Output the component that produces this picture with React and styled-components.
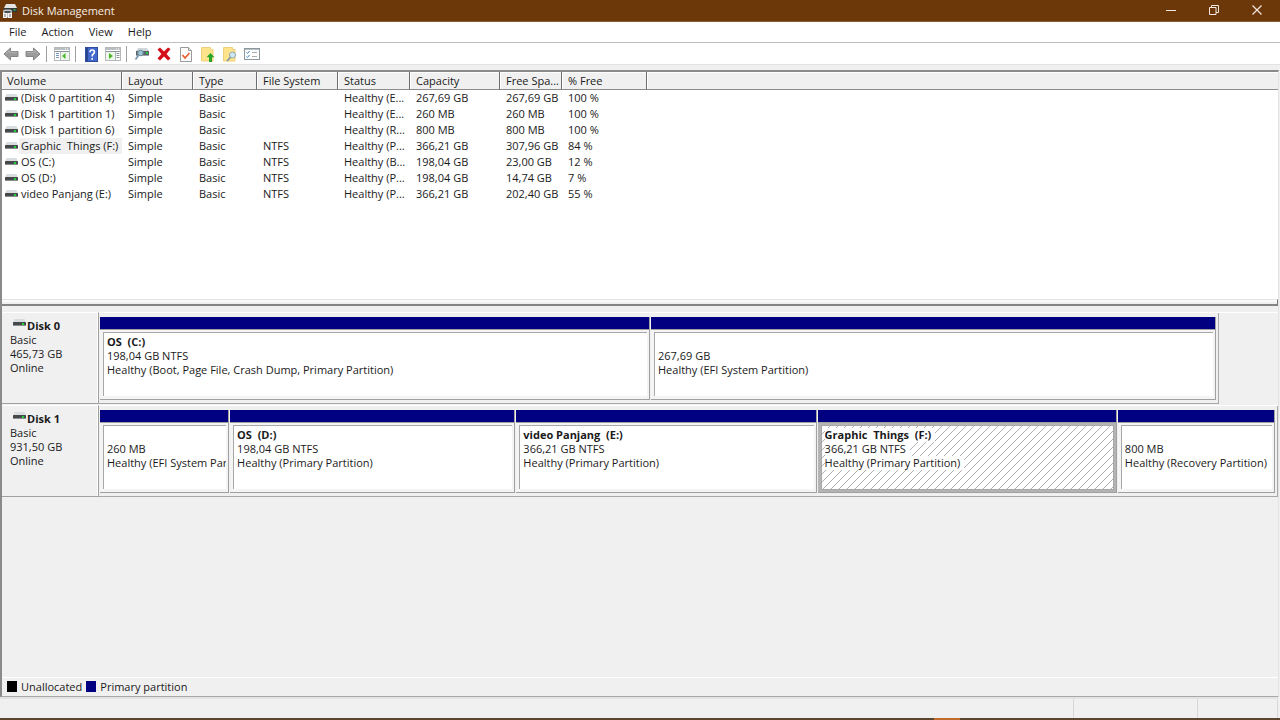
import React from "react"
import styled, { createGlobalStyle } from "styled-components"

const volumes = [
  { name: "(Disk 0 partition 4)", fs: "", status: "Healthy (E...", capacity: "267,69 GB", free: "267,69 GB", percent: "100 %" },
  { name: "(Disk 1 partition 1)", fs: "", status: "Healthy (E...", capacity: "260 MB", free: "260 MB", percent: "100 %" },
  { name: "(Disk 1 partition 6)", fs: "", status: "Healthy (R...", capacity: "800 MB", free: "800 MB", percent: "100 %" },
  { name: "Graphic  Things (F:)", fs: "NTFS", status: "Healthy (P...", capacity: "366,21 GB", free: "307,96 GB", percent: "84 %", selected: true },
  { name: "OS (C:)", fs: "NTFS", status: "Healthy (B...", capacity: "198,04 GB", free: "23,00 GB", percent: "12 %" },
  { name: "OS (D:)", fs: "NTFS", status: "Healthy (P...", capacity: "198,04 GB", free: "14,74 GB", percent: "7 %" },
  { name: "video Panjang (E:)", fs: "NTFS", status: "Healthy (P...", capacity: "366,21 GB", free: "202,40 GB", percent: "55 %" },
]

const columns = [
  { label: "Volume", width: 120 },
  { label: "Layout", width: 71 },
  { label: "Type", width: 64 },
  { label: "File System", width: 81 },
  { label: "Status", width: 72 },
  { label: "Capacity", width: 90 },
  { label: "Free Spa...", width: 62 },
  { label: "% Free", width: 85 },
  { label: "" },
]

const disks = [
  {
    name: "Disk 0",
    size: "465,73 GB",
    width: "95%",
    columns: "549fr 564fr",
    partitions: [
      { name: "OS  (C:)", size: "198,04 GB NTFS", status: "Healthy (Boot, Page File, Crash Dump, Primary Partition)" },
      { name: "", size: "267,69 GB", status: "Healthy (EFI System Partition)" },
    ],
  },
  {
    name: "Disk 1",
    size: "931,50 GB",
    width: "100%",
    columns: "129fr 285fr 300fr 299fr 157fr",
    partitions: [
      { name: "", size: "260 MB", status: "Healthy (EFI System Par" },
      { name: "OS  (D:)", size: "198,04 GB NTFS", status: "Healthy (Primary Partition)" },
      { name: "video Panjang  (E:)", size: "366,21 GB NTFS", status: "Healthy (Primary Partition)" },
      { name: "Graphic  Things  (F:)", size: "366,21 GB NTFS", status: "Healthy (Primary Partition)", selected: true },
      { name: "", size: "800 MB", status: "Healthy (Recovery Partition)" },
    ],
  },
]

// icons

const DriveIcon = () => (
  <svg width="13" height="8" viewBox="0 0 13 8" aria-hidden="true">
    <path d="M1.500 0h10L13 3.500H0z" fill="#dadddf" />
    <rect y="3" width="13" height="4" rx="0.500" fill="#45494c" />
    <rect y="6" width="13" height="1" fill="#8b8d8f" />
    <rect x="9" y="4" width="2" height="2" fill="#1fd33c" />
  </svg>
)

const AppIcon = () => (
  <svg width="16" height="16" viewBox="0 0 16 16" aria-hidden="true">
    <path d="M4 1h9l2 4H2z" fill="#e4e4e4" />
    <path d="M2 5h13v4H2z" fill="#33383a" />
    <path d="M11.500 6.200h2v1.400h-2z" fill="#35c54f" />
    <path d="M1 14.500V8.500q0-2 2-2h5q2 0 2 2v6z" fill="#c3c5c7" />
    <path d="M2.500 8h6v2h-6z" fill="#4c5052" />
    <path d="M1 10h4v5H1zM6 10h4v5H6z" fill="#f4f4f4" />
    <path d="M2.500 11h1v3h-1zM7.500 11h1v3h-1z" fill="#777" />
  </svg>
)

const BackIcon = () => (
  <svg width="16" height="14" viewBox="0 0 16 14" aria-hidden="true">
    <path d="M7.500 1v3.500H15v5H7.500V13L1 7z" fill="#9b9b9b" stroke="#858585" />
    <path d="M3 6.800L6.700 3.300v2H14" fill="none" stroke="#b5b5b5" />
  </svg>
)

const ForwardIcon = () => (
  <svg width="16" height="14" viewBox="0 0 16 14" aria-hidden="true">
    <path d="M8.500 1v3.500H1v5h7.500V13L15 7z" fill="#9b9b9b" stroke="#858585" />
    <path d="M13 6.800L9.300 3.300v2H2" fill="none" stroke="#b5b5b5" />
  </svg>
)

const TreeIcon = () => (
  <svg width="16" height="14" viewBox="0 0 16 14" aria-hidden="true">
    <rect x="0.500" y="0.500" width="15" height="13" fill="#fff" stroke="#b4b8bb" />
    <path d="M1 1h14v2H1z" fill="#b9bec2" />
    <path d="M11 2h1M13 2h1" stroke="#fff" />
    <path d="M1 4.500h14" stroke="#8c9398" />
    <path d="M6.500 5v8" stroke="#b4b8bb" />
    <path d="M2 6.500h3M2 8.500h3M2 10.500h3" stroke="#7698bb" />
    <path d="M7 5h8v8H7z" fill="#eff6ec" />
    <path d="M11.500 6v6L8 9z" fill="#48b828" />
  </svg>
)

const HelpIcon = () => (
  <svg width="13" height="15" viewBox="0 0 13 15" aria-hidden="true">
    <rect x="0.500" y="0.500" width="12" height="14" fill="#4268cc" stroke="#2f4d9e" />
    <path d="M1 1h2v13H1z" fill="#2a4691" />
    <path d="M5 5.200q0-2.200 2.200-2.200t2.200 2q0 1.200-1.200 2T7.200 9.500M7.200 11v1.800" fill="none" stroke="#fff" strokeWidth="1.600" />
  </svg>
)

const ActionPaneIcon = () => (
  <svg width="16" height="14" viewBox="0 0 16 14" aria-hidden="true">
    <rect x="0.500" y="0.500" width="15" height="13" fill="#fff" stroke="#b4b8bb" />
    <path d="M1 1h14v2H1z" fill="#b9bec2" />
    <path d="M11 2h1M13 2h1" stroke="#fff" />
    <path d="M1 4.500h14" stroke="#8c9398" />
    <path d="M10.500 5v8" stroke="#b4b8bb" />
    <path d="M11.500 6.500h3M11.500 8.500h3M11.500 10.500h3" stroke="#8a949c" />
    <path d="M1 5h9v8H1z" fill="#eff6ec" />
    <path d="M4 6v6l4-3z" fill="#48b828" />
  </svg>
)

const RescanIcon = () => (
  <svg width="16" height="14" viewBox="0 0 16 14" aria-hidden="true">
    <path d="M4 1h9l2 3H2z" fill="#d2d7da" />
    <path d="M2 4h13v4H2z" fill="#5b6468" />
    <path d="M2 8h13v1H2z" fill="#a0a5a8" />
    <path d="M12 5h2v2h-2z" fill="#2bc845" />
    <circle cx="6.500" cy="6" r="2.800" fill="#9cc5d6" stroke="#6e8d9b" />
    <path d="M4.500 8.300L1.500 12.500" stroke="#7897ad" strokeWidth="1.800" />
  </svg>
)

const DeleteIcon = () => (
  <svg width="14" height="14" viewBox="0 0 14 14" aria-hidden="true">
    <path d="M0.500 2.500L3 0.500 7 4.600 11 0.500 13.500 2 9.600 7 13.500 11.500 11 13.500 7 9.600 3 13.500 0.500 11.500 4.400 7z" fill="#d50f1a" />
  </svg>
)

const PropertiesIcon = () => (
  <svg width="12" height="15" viewBox="0 0 12 15" aria-hidden="true">
    <path d="M0.500 0.500h8l3 3v11h-11z" fill="#fbfbfb" stroke="#9a9a9a" />
    <path d="M8.500 0.500v3h3" fill="#ddd" stroke="#9a9a9a" />
    <path d="M2.500 8l2.500 3 4.500-5" fill="none" stroke="#ec5a2a" strokeWidth="1.600" />
  </svg>
)

const FolderUpIcon = () => (
  <svg width="14" height="15" viewBox="0 0 14 15" aria-hidden="true">
    <path d="M0.500 0.500h9v2H12v11.500H0.500z" fill="#ffe48c" stroke="#efd078" />
    <path d="M9.500 6L13.500 10.200H11V15H8v-4.800H5.500z" fill="#28a62c" />
  </svg>
)

const FolderSearchIcon = () => (
  <svg width="14" height="15" viewBox="0 0 14 15" aria-hidden="true">
    <path d="M0.500 0.500h9v2H12v11.500H0.500z" fill="#ffe48c" stroke="#efd078" />
    <circle cx="9.500" cy="8" r="3" fill="#cfe8f3" stroke="#8fa8b2" />
    <path d="M7.500 10.300L4 14" stroke="#7a93a8" strokeWidth="1.600" />
  </svg>
)

const ListIcon = () => (
  <svg width="16" height="12" viewBox="0 0 16 12" aria-hidden="true">
    <rect x="0.500" y="0.500" width="15" height="11" fill="#fff" stroke="#8d979e" />
    <path d="M1 1.500h14" stroke="#b9c1c7" />
    <path d="M2.500 4.500l1 1 2-2.500M2.500 8.500l1 1 2-2.500" fill="none" stroke="#3d87c8" />
    <path d="M8 4.500h5M8 8.500h5" stroke="#a5adb3" />
  </svg>
)

const MinimizeIcon = () => (
  <svg width="10" height="10" viewBox="0 0 10 10" aria-hidden="true">
    <path d="M0 5.500h10" stroke="#f2e8df" />
  </svg>
)

const RestoreIcon = () => (
  <svg width="10" height="10" viewBox="0 0 10 10" aria-hidden="true">
    <path d="M0.500 2.500h6.500v7H0.500zM2.500 2.500v-2h7v7H7" fill="none" stroke="#f2e8df" />
  </svg>
)

const CloseIcon = () => (
  <svg width="10" height="10" viewBox="0 0 10 10" aria-hidden="true">
    <path d="M0.500 0.500l9 9M9.500 0.500l-9 9" stroke="#f2e8df" strokeWidth="1.200" />
  </svg>
)

const App = () => (
  <Window>
    <GlobalStyle />
    <TitleBar>
      <AppIcon />
      <Title>Disk Management</Title>
      <CaptionButton aria-label="Minimize"><MinimizeIcon /></CaptionButton>
      <CaptionButton aria-label="Restore"><RestoreIcon /></CaptionButton>
      <CaptionButton aria-label="Close"><CloseIcon /></CaptionButton>
    </TitleBar>

    <MenuBar>
      <MenuItem>File</MenuItem>
      <MenuItem>Action</MenuItem>
      <MenuItem>View</MenuItem>
      <MenuItem>Help</MenuItem>
    </MenuBar>

    <Toolbar>
      <ToolButton aria-label="Back"><BackIcon /></ToolButton>
      <ToolButton aria-label="Forward"><ForwardIcon /></ToolButton>
      <Separator />
      <ToolButton aria-label="Show console tree"><TreeIcon /></ToolButton>
      <Separator />
      <ToolButton aria-label="Help"><HelpIcon /></ToolButton>
      <ToolButton aria-label="Show action pane"><ActionPaneIcon /></ToolButton>
      <Separator />
      <ToolButton aria-label="Rescan disks"><RescanIcon /></ToolButton>
      <ToolButton aria-label="Delete"><DeleteIcon /></ToolButton>
      <ToolButton aria-label="Properties"><PropertiesIcon /></ToolButton>
      <ToolButton aria-label="Open"><FolderUpIcon /></ToolButton>
      <ToolButton aria-label="Explore"><FolderSearchIcon /></ToolButton>
      <ToolButton aria-label="Settings"><ListIcon /></ToolButton>
    </Toolbar>

    <Content>
      <VolumePane>
        <VolumeTable>
          <colgroup>
            {columns.map(c => <Col key={c.label} $width={c.width} />)}
          </colgroup>
          <thead>
            <tr>
              {columns.map(c => <HeaderCell key={c.label} $last={!c.label}>{c.label}</HeaderCell>)}
            </tr>
          </thead>
          <tbody>
            {volumes.map(v => (
              <tr key={v.name}>
                <NameCell>
                  <VolumeName>
                    <DriveIcon />
                    <VolumeLabel $selected={v.selected}>{v.name}</VolumeLabel>
                  </VolumeName>
                </NameCell>
                <Cell>Simple</Cell>
                <Cell>Basic</Cell>
                <Cell>{v.fs}</Cell>
                <Cell>{v.status}</Cell>
                <Cell>{v.capacity}</Cell>
                <Cell>{v.free}</Cell>
                <Cell>{v.percent}</Cell>
                <Cell />
              </tr>
            ))}
          </tbody>
        </VolumeTable>
      </VolumePane>
      <Splitter />

      <DiskPane>
        {disks.map(d => (
          <DiskRow key={d.name}>
            <DiskInfo>
              <DiskTitle><DriveIcon />{d.name}</DiskTitle>
              <Line>Basic</Line>
              <Line>{d.size}</Line>
              <Line>Online</Line>
            </DiskInfo>
            <Track>
              <Partitions $width={d.width} $columns={d.columns}>
                {d.partitions.map(p => (
                  <Partition key={p.name + p.status}>
                    <Stripe />
                    <PartitionBody $selected={p.selected}>
                      <PartitionInner $selected={p.selected}>
                        <Line $bold><Text $selected={p.selected}>{p.name}</Text></Line>
                        <Line><Text $selected={p.selected}>{p.size}</Text></Line>
                        <Line><Text $selected={p.selected}>{p.status}</Text></Line>
                      </PartitionInner>
                    </PartitionBody>
                  </Partition>
                ))}
              </Partitions>
            </Track>
          </DiskRow>
        ))}
      </DiskPane>

      <Legend>
        <Swatch $color="#000" />
        <LegendText>Unallocated</LegendText>
        <Swatch $color="#000080" />
        <LegendText>Primary partition</LegendText>
      </Legend>
    </Content>

    <StatusBar>
      <StatusCell />
      <StatusCell $width={124} />
      <StatusCell $width={80} />
    </StatusBar>
    <TaskbarEdge />
  </Window>
)

export default App

const GlobalStyle = createGlobalStyle`
  body {
    margin: 0;
    background: #f0f0f0;
    color: #1a1a1a;
    font-family: "Open Sans", "Noto Sans", sans-serif;
    font-size: 11px;
  }
  * {
    box-sizing: border-box;
  }
  button {
    border: 0;
    padding: 0;
    background: none;
    color: inherit;
    font: inherit;
  }
  svg {
    display: block;
    flex: none;
  }
`

const Window = styled.div`
  display: flex;
  flex-direction: column;
  height: 100vh;
`

const TitleBar = styled.header`
  display: flex;
  align-items: center;
  flex: none;
  height: 22px;
  padding: 0 2px;
  background: #6c380a;
  border-bottom: 1px solid #8a6037;
  color: #f6efe8;
`

const Title = styled.h1`
  flex: 1;
  margin: 0 0 0 4px;
  font-size: 11px;
  font-weight: normal;
`

const CaptionButton = styled.button`
  display: flex;
  align-items: center;
  justify-content: center;
  align-self: flex-start;
  width: 43px;
  height: 20px;
`

const MenuBar = styled.nav`
  display: flex;
  align-items: center;
  flex: none;
  gap: 15px;
  height: 21px;
  padding-left: 9px;
  background: #fff;
  border-bottom: 1px solid #bfbfbf;
`

const MenuItem = styled.button`
  line-height: 18px;
`

const Toolbar = styled.div`
  display: flex;
  align-items: center;
  flex: none;
  height: 22px;
  padding-top: 1px;
  background: #fff;
  border-bottom: 1px solid #e2e2e2;
`

const ToolButton = styled.button`
  display: flex;
  align-items: center;
  justify-content: center;
  width: 22px;
  height: 20px;
`

const Separator = styled.span`
  width: 1px;
  height: 16px;
  margin: 0 4px 0 2px;
  background: #a0a0a0;
`

const Content = styled.main`
  display: flex;
  flex-direction: column;
  flex: 1;
  min-height: 0;
  margin: 5px 1px 0 0;
  border: solid #8a8a8a;
  border-width: 2px 1px 1px 2px;
  border-right-color: #e3e3e3;
  border-bottom-color: #a8a8a8;
`

const VolumePane = styled.section`
  flex: 230 1 0;
  min-height: 0;
  overflow: hidden;
  background: #fff;
`

const VolumeTable = styled.table`
  width: 100%;
  table-layout: fixed;
  border-collapse: separate;
  border-spacing: 0;
`

const Col = styled.col`
  width: ${props => (props.$width ? props.$width + "px" : "auto")};
`

const HeaderCell = styled.th`
  height: 18px;
  padding: 0 0 0 6px;
  background: #f0f0f0;
  border-right: ${props => (props.$last ? "0" : "1px solid #6e6e6e")};
  border-bottom: 1px solid #8c8c8c;
  box-shadow: inset 1px 1px 0 #fff;
  font-weight: normal;
  line-height: 16px;
  text-align: left;
  white-space: nowrap;

  &:first-child {
    padding-left: 5px;
  }
`

const Cell = styled.td`
  height: 16px;
  padding: 0 0 0 6px;
  line-height: 16px;
  white-space: nowrap;
`

const NameCell = styled(Cell)`
  padding-left: 3px;
`

const VolumeName = styled.div`
  display: flex;
  align-items: center;
`

const VolumeLabel = styled.span`
  flex: 1;
  margin-left: 1px;
  padding-left: 2px;
  background: ${props => (props.$selected ? "#f0f0f0" : "transparent")};
  white-space: pre;
`

const Splitter = styled.div`
  flex: none;
  height: 7px;
  background: #f0f0f0;
  border-top: 1px solid #e3e3e3;
  border-right: 1px solid #7a7a7a;
  border-bottom: 2px solid #858585;
  box-shadow: inset 0 2px 0 #fafafa;
`

const DiskPane = styled.section`
  flex: 369 1 0;
  min-height: 0;
  overflow: hidden;
  padding-top: 6px;
`

const DiskRow = styled.div`
  display: flex;
  height: 93px;
`

const DiskInfo = styled.div`
  flex: none;
  width: 97px;
  height: 92px;
  padding: 6px 0 0 8px;
  border-top: 1px solid #fff;
  border-right: 1px solid #a0a0a0;
  border-bottom: 1px solid #a0a0a0;
  box-shadow: inset -1px 0 0 #fff;
`

const DiskTitle = styled.h2`
  display: flex;
  gap: 1px;
  margin: 0;
  padding-left: 3px;
  font-size: 11px;
  font-weight: bold;
  line-height: 14px;
`

const Line = styled.div`
  height: 14px;
  overflow: hidden;
  font-weight: ${props => (props.$bold ? "bold" : "normal")};
  line-height: 14px;
  white-space: pre;
`

const Text = styled.span`
  display: inline-block;
  height: 14px;
  padding-right: ${props => (props.$selected ? "4px" : "0")};
  background: ${props => (props.$selected ? "#fff" : "transparent")};
`

const Track = styled.div`
  flex: 1;
  min-width: 0;
  border-top: 1px solid #fff;
`

const Partitions = styled.div`
  display: grid;
  grid-template-columns: ${props => props.$columns};
  gap: 1px;
  width: ${props => props.$width};
  height: 91px;
  padding: 4px 2px 3px 1px;
  border-right: 1px solid #a8a8a8;
  border-bottom: 1px solid #a8a8a8;
`

const Partition = styled.article`
  display: flex;
  flex-direction: column;
  min-width: 0;
  border-right: 1px solid #a0a0a0;
  border-bottom: 1px solid #a0a0a0;
`

const Stripe = styled.div`
  flex: none;
  height: 13px;
  background: #000080;
  border-bottom: 1px solid #a0a0a0;
`

const PartitionBody = styled.div`
  flex: 1;
  min-height: 0;
  padding: ${props => (props.$selected ? "2px 2px 2px 3px" : "2px 2px 3px 3px")};
  background: ${props => (props.$selected ? "#b4b4b4" : "#f4f4f4")};
`

const PartitionInner = styled.div`
  height: 100%;
  padding: 2px 0 0 3px;
  overflow: hidden;
  border: solid #a8a8a8;
  border-width: ${props => (props.$selected ? "1px" : "1px 0 0 1px")};
  background: ${props =>
    props.$selected
      ? "0 0 / 8px 8px linear-gradient(135deg, #fff 45%, #b0b0b0 45% 55%, #fff 55%)"
      : "#fff"};
`

const Legend = styled.footer`
  display: flex;
  align-items: center;
  flex: none;
  height: 19px;
  padding: 0 0 1px 5px;
  border-top: 1px solid #fff;
`

const Swatch = styled.span`
  width: 10px;
  height: 11px;
  background: ${props => props.$color};
`

const LegendText = styled.span`
  margin: 0 4px;
`

const StatusBar = styled.div`
  display: flex;
  flex: none;
  height: 21px;
  margin-right: 2px;
  border-top: 2px solid #e3e3e3;
`

const StatusCell = styled.div`
  flex: ${props => (props.$width ? "none" : "1")};
  width: ${props => (props.$width ? props.$width + "px" : "auto")};
  border-right: 1px solid #d7d7d7;
`

const TaskbarEdge = styled.div`
  flex: none;
  height: 2px;
  background: linear-gradient(90deg, #5b452f 73%, #c06a2c 73% 75%, #5b452f 75%);
`
